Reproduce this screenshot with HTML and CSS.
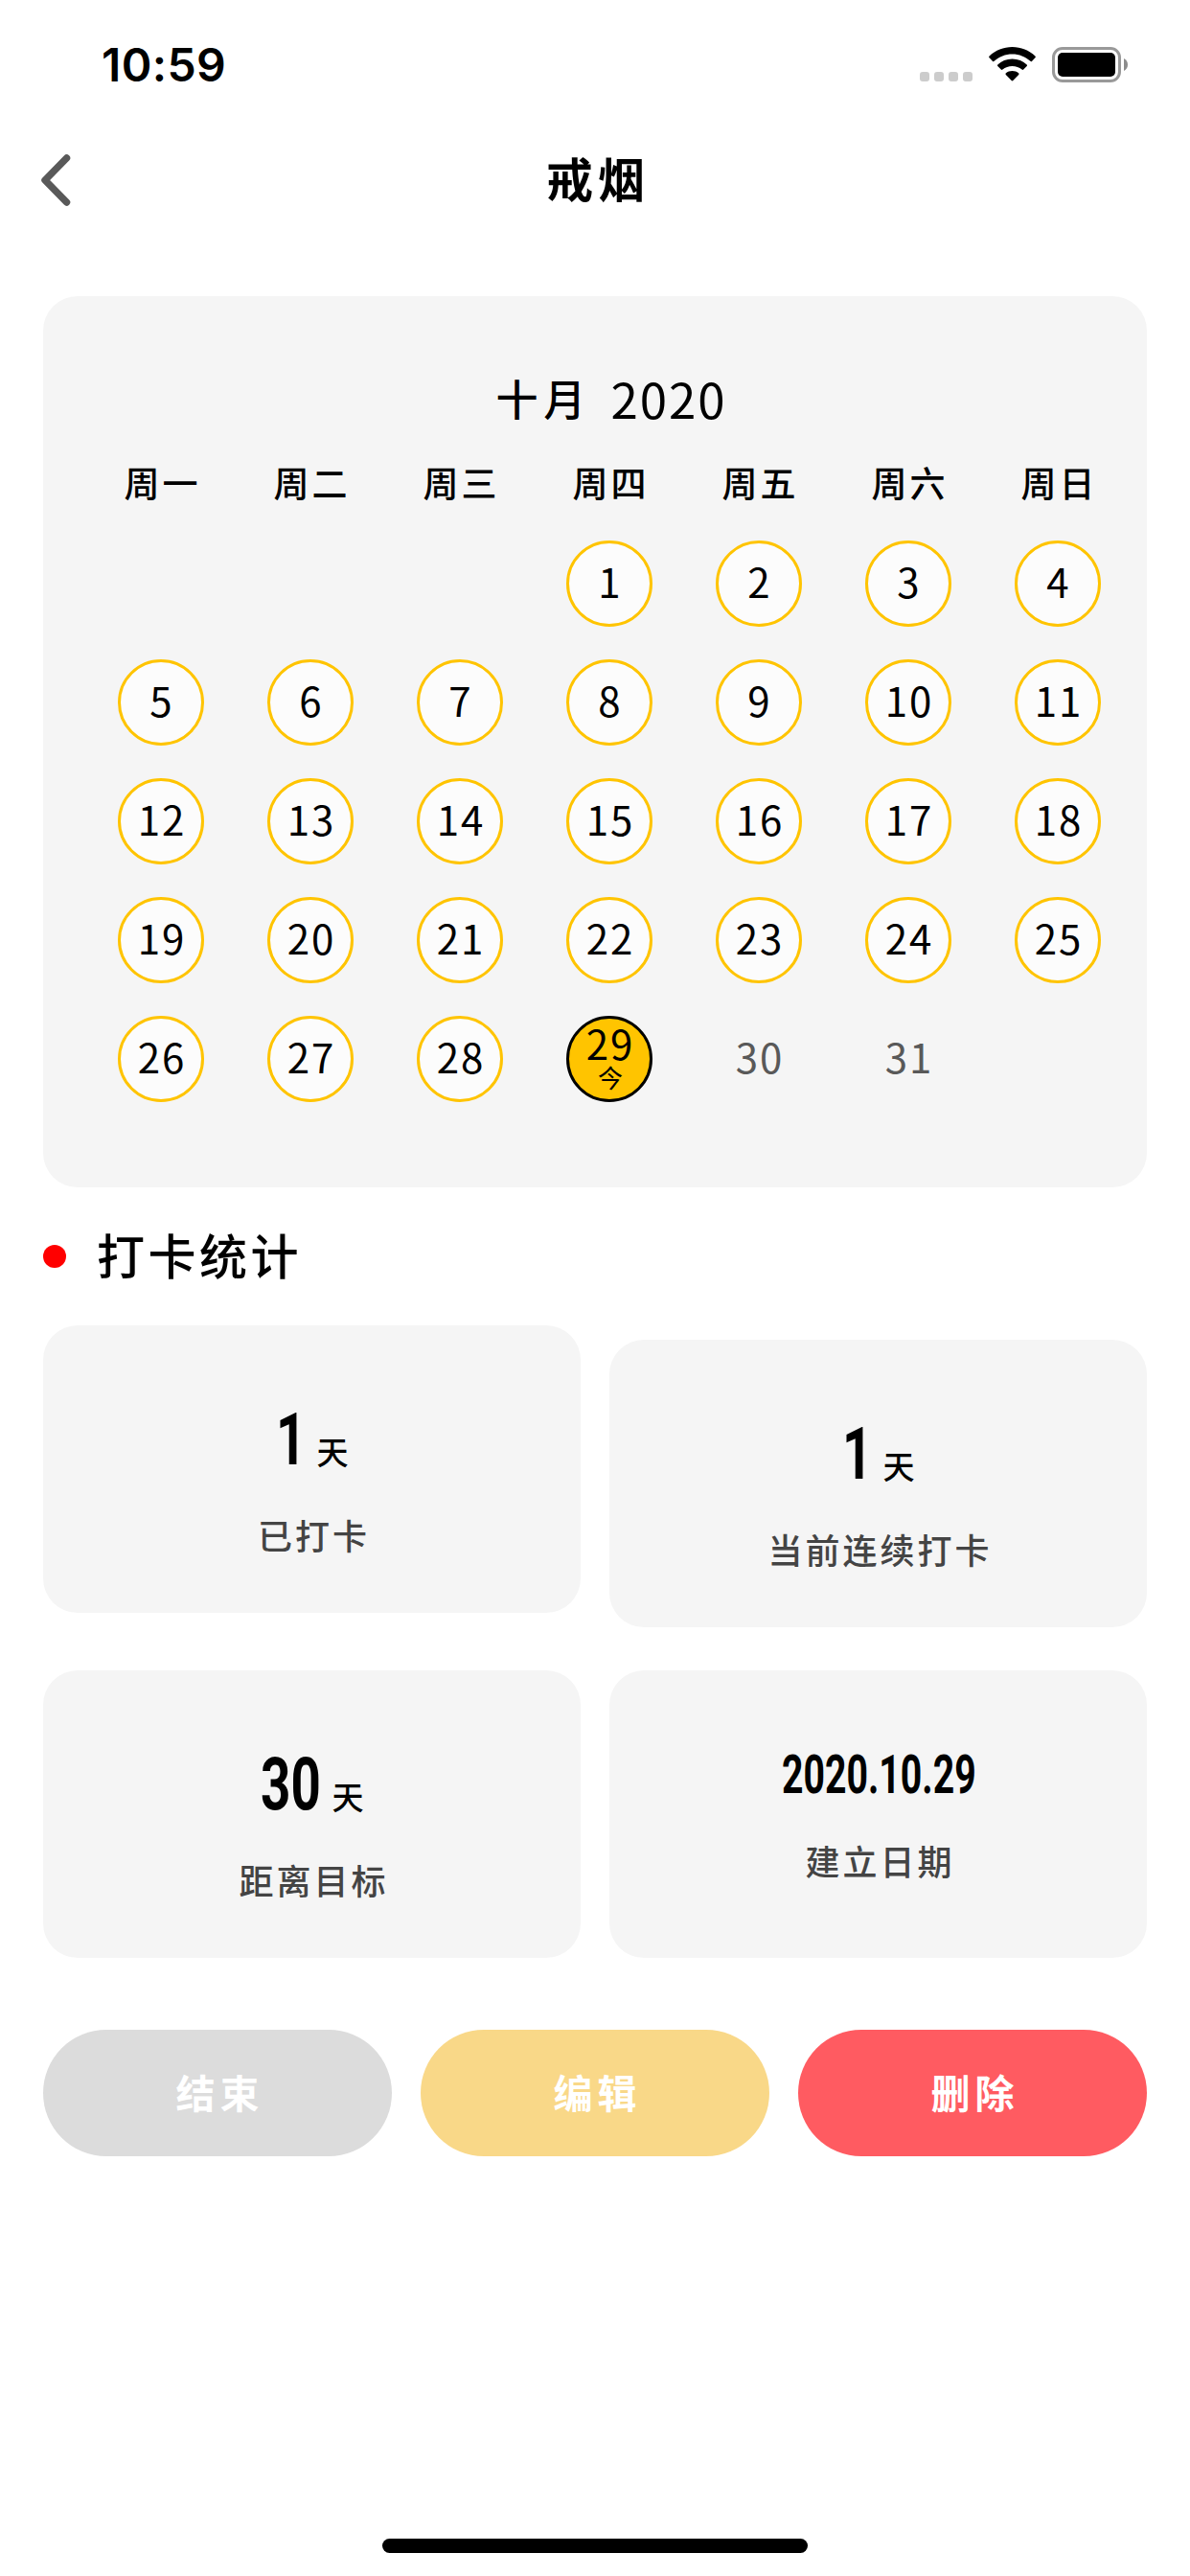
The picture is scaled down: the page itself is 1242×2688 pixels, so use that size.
FILE: index.html
```html
<!DOCTYPE html>
<html lang="zh-CN">
<head>
<meta charset="utf-8">
<title>戒烟</title>
<link rel="stylesheet" href="styles.css">
</head>
<body>
<div class="screen">
  <header class="status">
    <span class="clock">10:59</span>
    <div class="status-icons">
      <div class="signal"><i></i><i></i><i></i><i></i></div>
      <svg class="wifi" width="49" height="36" viewBox="0 0 49 36">
        <path d="M24.5 0C33.600 0 42 3.500 48.400 9.500Q49.300 10.400 48.400 11.300L44.900 14.900Q44.200 15.500 43.400 14.800C38.300 10.200 31.700 7.500 24.500 7.500S10.700 10.200 5.600 14.800Q4.800 15.500 4.100 14.900L.6 11.300Q-.3 10.400 .6 9.500C7 3.500 15.400 0 24.500 0Z"/>
        <path d="M24.500 12.500C30.500 12.500 35.800 14.700 39.700 18.500Q40.500 19.300 39.700 20.100L36.200 23.600Q35.400 24.300 34.600 23.600C31.800 21.200 28.300 19.900 24.500 19.900S17.200 21.200 14.400 23.600Q13.600 24.300 12.800 23.600L9.300 20.100Q8.500 19.300 9.300 18.500C13.200 14.700 18.500 12.500 24.500 12.500Z"/>
        <path d="M24.500 25C27.100 25 29.300 25.800 31.100 27.300Q32 28.100 31.200 28.900L25.300 35Q24.500 35.800 23.700 35L17.800 28.900Q17 28.100 17.900 27.300C19.700 25.800 21.900 25 24.500 25Z"/>
      </svg>
      <svg class="battery" width="80" height="37" viewBox="0 0 80 37">
        <rect x="1.500" y="1.500" width="69" height="34" rx="9.500" fill="none" stroke="#999" stroke-width="3"/>
        <rect x="6" y="6" width="60" height="25" rx="5" fill="#000"/>
        <path d="M75 12C77.700 13.200 79 15.800 79 18.500S77.700 23.800 75 25Z" fill="#8c8c8c"/>
      </svg>
    </div>
  </header>
  <nav class="nav">
    <svg class="back" width="34" height="56" viewBox="0 0 34 56"><path d="M28.500 5L6 28L28.500 51" fill="none" stroke="#595959" stroke-width="7.500" stroke-linecap="round" stroke-linejoin="round"/></svg>
    <h1 class="title">戒烟</h1>
  </nav>

  <section class="calendar">
    <div class="month"><span class="month-name">十月</span><span class="year">2020</span></div>
    <div class="grid weekdays">
      <span>周一</span><span>周二</span><span>周三</span><span>周四</span><span>周五</span><span>周六</span><span>周日</span>
    </div>
    <div class="grid days">
      <span class="day first">1</span><span class="day">2</span><span class="day">3</span><span class="day">4</span>
      <span class="day">5</span><span class="day">6</span><span class="day">7</span><span class="day">8</span><span class="day">9</span><span class="day">10</span><span class="day">11</span>
      <span class="day">12</span><span class="day">13</span><span class="day">14</span><span class="day">15</span><span class="day">16</span><span class="day">17</span><span class="day">18</span>
      <span class="day">19</span><span class="day">20</span><span class="day">21</span><span class="day">22</span><span class="day">23</span><span class="day">24</span><span class="day">25</span>
      <span class="day">26</span><span class="day">27</span><span class="day">28</span>
      <span class="day today"><span class="today-num">29</span><span class="today-label">今</span></span>
      <span class="day future">30</span><span class="day future">31</span>
    </div>
  </section>

  <h2 class="section"><i class="dot"></i>打卡统计</h2>

  <div class="stats">
    <div class="card"><div class="value"><span class="num"><b>1</b></span><span class="unit">天</span></div><div class="label">已打卡</div></div>
    <div class="card lowered"><div class="value"><span class="num"><b>1</b></span><span class="unit">天</span></div><div class="label">当前连续打卡</div></div>
    <div class="card"><div class="value"><span class="num two"><b>30</b></span><span class="unit">天</span></div><div class="label">距离目标</div></div>
    <div class="card created"><div class="value"><span class="num date"><b>2020.10.29</b></span></div><div class="label">建立日期</div></div>
  </div>

  <div class="actions">
    <button class="btn end">结束</button>
    <button class="btn edit">编辑</button>
    <button class="btn delete">删除</button>
  </div>
  <div class="home"></div>
</div>
</body>
</html>
```

FILE: styles.css
```css
* { box-sizing: border-box; }
body {
  margin: 0;
  background: #fff;
  color: #000;
  font-family: "Noto Sans CJK SC", sans-serif;
}
.screen {
  display: flex;
  flex-direction: column;
  width: 1242px;
  height: 2688px;
  padding: 0 45px 24px;
}

/* status bar */
.status {
  display: flex;
  justify-content: space-between;
  height: 132px;
  padding: 49px 19px 0 61px;
}
.clock {
  font: 600 48px/38px Inter, sans-serif;
  letter-spacing: 0.4px;
}
.status-icons { display: flex; align-items: flex-start; }
.signal { display: flex; gap: 5px; margin: 26px 17px 0 0; }
.signal i { width: 10px; height: 10px; border-radius: 3px; background: #ccc; }
.wifi { margin-right: 17px; }

/* navigation bar */
.nav {
  display: grid;
  grid-template-columns: 1fr auto 1fr;
  align-items: center;
  height: 111px;
  margin-bottom: 66px;
}
.back { margin-left: -4px; }
.title {
  margin: 0 -6px 5px 0;
  font-size: 49px;
  line-height: 60px;
  font-weight: 700;
  letter-spacing: 5px;
}

/* calendar */
.calendar {
  height: 930px;
  padding: 76px 15px 0 45px;
  border-radius: 36px;
  background: #f5f5f5;
}
.month {
  display: flex;
  justify-content: center;
  align-items: center;
  gap: 20px;
  height: 60px;
  padding-left: 4px;
  line-height: 60px;
}
.month-name { font-size: 44px; letter-spacing: 6px; font-weight: 500; }
.year { font-size: 51px; letter-spacing: 2px; }
.grid { display: grid; grid-template-columns: repeat(7, 156px); }
.weekdays {
  height: 60px;
  margin-top: 28px;
  font-size: 37px;
  line-height: 60px;
  font-weight: 500;
  letter-spacing: 3px;
  text-align: center;
}
.weekdays span { padding-left: 3px; }
.days {
  grid-auto-rows: 90px;
  row-gap: 34px;
  justify-items: center;
  margin-top: 31px;
}
.day {
  display: flex;
  align-items: center;
  justify-content: center;
  width: 90px;
  height: 90px;
  padding-left: 2px;
  padding-bottom: 6px;
  border: 3px solid #ffc400;
  border-radius: 50%;
  background: #fcfcfc;
  font-size: 42px;
  line-height: 50px;
  letter-spacing: 2px;
}
.day.first { grid-column: 4; }
.day.future { border-color: transparent; background: none; color: #595959; }
.day.today {
  flex-direction: column;
  justify-content: flex-start;
  padding-bottom: 0;
  border-color: #000;
  background: #ffc400;
}
.today-num { height: 48px; line-height: 50px; }
.today-label { font-size: 26px; line-height: 26px; letter-spacing: 0; }

/* statistics */
.section {
  display: flex;
  align-items: center;
  height: 72px;
  margin: 36px 0;
  font-size: 50px;
  font-weight: 500;
  letter-spacing: 3.500px;
  line-height: 60px;
  padding-bottom: 6px;
}
.dot {
  width: 24px;
  height: 24px;
  margin: 6px 32px 0 0;
  border-radius: 50%;
  background: #f00;
}
.stats {
  display: grid;
  grid-template-columns: 561px 561px;
  column-gap: 30px;
  grid-template-rows: 315px 300px;
  row-gap: 45px;
}
.card {
  height: 300px;
  padding-top: 77px;
  border-radius: 36px;
  background: #f5f5f5;
}
.lowered { margin-top: 15px; }
.value {
  display: flex;
  justify-content: center;
  align-items: baseline;
  height: 85px;
  line-height: 84px;
}
.num { display: block; width: 31px; font-family: Roboto, sans-serif; font-size: 76px; }
.num.two { width: 63px; }
.num b { display: inline-block; transform: scaleX(0.72); transform-origin: 0 50%; }
.unit { margin-left: 12px; font-size: 33px; font-weight: 500; }
.label {
  margin-top: 28px;
  padding-left: 4px;
  color: #444;
  font-size: 36px;
  line-height: 56px;
  font-weight: 500;
  letter-spacing: 3px;
  text-align: center;
}
.created { padding-top: 70px; }
.created .value { height: 78px; line-height: 78px; }
.num.date { width: 202px; font-size: 56px; }
.num.date b { transform: scaleX(0.7); }
.created .label { margin-top: 22px; }

/* actions */
.actions { display: flex; gap: 30px; margin-top: 75px; }
.btn {
  flex: 1;
  height: 132px;
  padding: 0 0 4px 5px;
  border: 0;
  border-radius: 66px;
  color: #fff;
  font-family: inherit;
  font-size: 41px;
  font-weight: 700;
  letter-spacing: 5px;
}
.end { background: #dcdcdc; }
.edit { background: #f9d888; }
.delete { background: #ff5b61; }

.home {
  width: 444px;
  height: 15px;
  margin: auto auto 0;
  border-radius: 8px;
  background: #000;
}
```
